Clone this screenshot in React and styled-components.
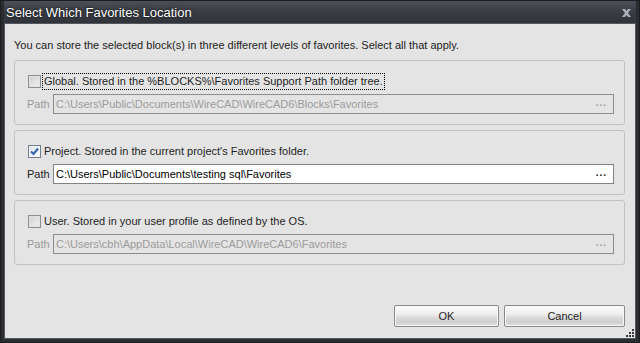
import React from 'react';
import styled, { createGlobalStyle } from 'styled-components';

const Global = createGlobalStyle`
  html, body { margin: 0; padding: 0; background: #2b2d31; }
  body { font-family: "Liberation Sans", Arial, sans-serif; font-size: 11px; }
`;

const Window = styled.div`
  width: 640px;
  height: 343px;
  box-sizing: border-box;
  display: flex;
  flex-direction: column;
  background: #2a2c30;
  border: 1px solid #1c1d20;
  padding: 0 3px 3px 3px;
`;

const TitleBar = styled.div`
  height: 22px;
  flex: none;
  display: flex;
  align-items: center;
  justify-content: space-between;
  padding: 0 4px 0 2px;
  background: linear-gradient(#4b4f57, #3a3d44 45%, #30333a);
  color: #fff;
  font-size: 13px;
  text-shadow: 0 0 2px #000;
`;

const Close = styled.svg`
  width: 11px;
  height: 10px;
  margin-top: 1px;
`;

const Client = styled.div`
  flex: 1;
  display: flex;
  flex-direction: column;
  background: #e4e4e4;
  border: 1px solid #55585e;
  padding: 14px 10px 11px 9px;
  position: relative;
  color: #1e1e1e;
`;

const Intro = styled.div`
  height: 14px;
  line-height: 14px;
  margin-bottom: 8px;
  color: #222;
`;

const Group = styled.div`
  height: 65px;
  box-sizing: border-box;
  border: 1px solid #c2c2c2;
  border-radius: 3px;
  margin-bottom: 5px;
  padding: 12px 10px 0 11px;
  display: flex;
  flex-direction: column;
`;

const CheckRow = styled.div`
  display: flex;
  align-items: center;
  height: 17px;
  margin-bottom: 4px;
`;

const Box = styled.span`
  width: 11px;
  height: 11px;
  border: 1px solid ${p => (p.$checked ? '#6f7c8c' : '#8e8e8e')};
  background: ${p =>
    p.$checked ? 'linear-gradient(135deg, #dde3ea, #fdfdfd)' : 'linear-gradient(135deg, #cfcfcf, #f3f3f3)'};
  box-shadow: inset 0 0 0 1px ${p => (p.$checked ? '#f4f6f8' : '#e2e2e2')};
  margin-left: 2px;
  margin-right: 1px;
  display: flex;
  align-items: center;
  justify-content: center;
`;

const Label = styled.span`
  padding: 1px 1px 2px 1px;
  border: 1px dotted ${p => (p.$focus ? '#000' : 'transparent')};
  color: #1e1e1e;
  white-space: nowrap;
`;

const PathRow = styled.div`
  display: flex;
  align-items: center;
`;

const PathLabel = styled.span`
  width: 26px;
  margin-left: 1px;
  color: ${p => (p.$disabled ? '#9a9a9a' : '#222')};
`;

const Field = styled.div`
  flex: 1;
  height: 20px;
  box-sizing: border-box;
  border: 1px solid ${p => (p.$disabled ? '#8c8c8c' : '#828282')};
  background: ${p => (p.$disabled ? '#e4e4e4' : '#fff')};
  color: ${p => (p.$disabled ? '#9c9c9c' : '#000')};
  display: flex;
  align-items: center;
  justify-content: space-between;
  padding: 0 6px 0 2px;
`;

const Dots = styled.span`
  letter-spacing: 1px;
  font-weight: bold;
  font-size: 10px;
  color: ${p => (p.$disabled ? '#a0a0a0' : '#222')};
  margin-top: -3px;
`;

const Footer = styled.div`
  margin-top: auto;
  display: flex;
  justify-content: flex-end;
  gap: 5px;
`;

const Button = styled.button`
  width: ${p => p.$w}px;
  height: 22px;
  box-sizing: border-box;
  border: 1px solid #8a8a8a;
  border-radius: 2px;
  background: linear-gradient(#fbfbfb, #ececec 45%, #dcdcdc 55%, #cfcfcf 80%, #e2e2e2);
  box-shadow: inset 0 0 0 1px #f8f8f8;
  font-family: inherit;
  font-size: 11px;
  color: #1e1e1e;
  padding: 0;
`;

const Grip = styled.svg`
  position: absolute;
  right: 0;
  bottom: 0;
  width: 10px;
  height: 10px;
`;

const groups = [
  {
    label: 'Global. Stored in the %BLOCKS%\\Favorites Support Path folder tree.',
    path: 'C:\\Users\\Public\\Documents\\WireCAD\\WireCAD6\\Blocks\\Favorites',
    checked: false,
    focus: true,
  },
  {
    label: "Project. Stored in the current project's Favorites folder.",
    path: 'C:\\Users\\Public\\Documents\\testing sql\\Favorites',
    checked: true,
  },
  {
    label: 'User. Stored in your user profile as defined by the OS.',
    path: 'C:\\Users\\cbh\\AppData\\Local\\WireCAD\\WireCAD6\\Favorites',
    checked: false,
  },
];

const Check = () => (
  <svg width="9" height="9" viewBox="0 0 9 9">
    <path d="M1 4.5 L3.5 7 L8 1.5" fill="none" stroke="#2f62b0" strokeWidth="2" />
  </svg>
);

export default function App() {
  return (
    <Window>
      <Global />
      <TitleBar>
        <span>Select Which Favorites Location</span>
        <Close viewBox="0 0 11 10">
          <path d="M1 1h3l1.5 2 1.5-2h3l-3 4 3 4h-3l-1.5-2-1.5 2h-3l3-4z" fill="#aab3bd" />
        </Close>
      </TitleBar>
      <Client>
        <Intro>You can store the selected block(s) in three different levels of favorites. Select all that apply.</Intro>
        {groups.map(g => (
          <Group key={g.label}>
            <CheckRow>
              <Box $checked={g.checked}>{g.checked && <Check />}</Box>
              <Label $focus={g.focus}>{g.label}</Label>
            </CheckRow>
            <PathRow>
              <PathLabel $disabled={!g.checked}>Path</PathLabel>
              <Field $disabled={!g.checked}>
                <span>{g.path}</span>
                <Dots $disabled={!g.checked}>...</Dots>
              </Field>
            </PathRow>
          </Group>
        ))}
        <Footer>
          <Button $w={105}>OK</Button>
          <Button $w={121}>Cancel</Button>
        </Footer>
        <Grip viewBox="0 0 10 10">
          {[[7, 1], [4, 4], [7, 4], [1, 7], [4, 7], [7, 7]].map(([x, y]) => (
            <rect key={`${x}-${y}`} x={x} y={y} width="2" height="2" fill="#3a3a3a" />
          ))}
        </Grip>
      </Client>
    </Window>
  );
}
